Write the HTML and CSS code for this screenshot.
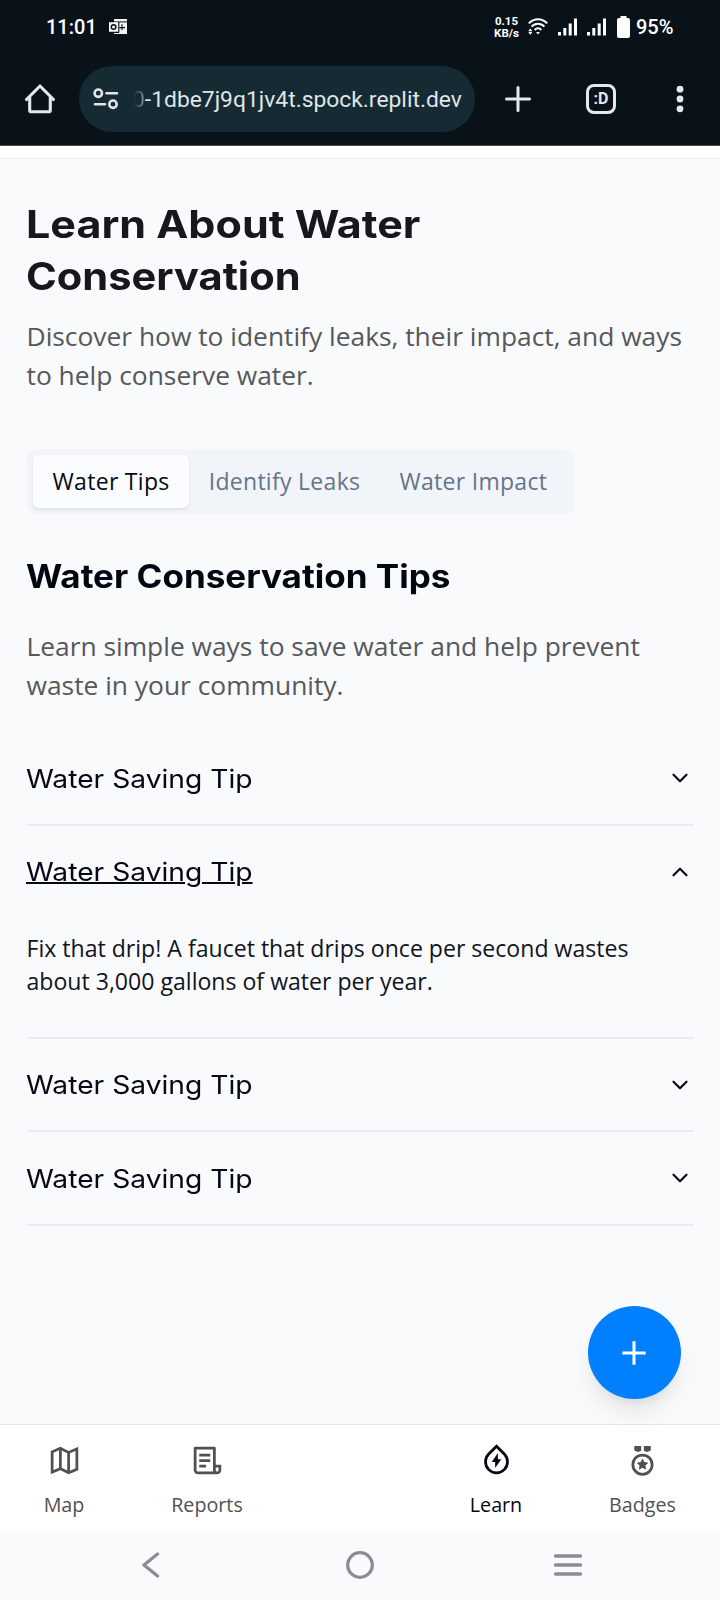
FILE: index.html
```html
<!DOCTYPE html>
<html lang="en">
<head>
<meta charset="utf-8">
<title>Learn About Water Conservation</title>
<link rel="stylesheet" href="styles.css">
</head>
<body>
<div class="phone">
  <header class="chrome">
    <div class="status">
      <span class="clock">11:01</span>
      <svg class="mail" width="19" height="16" viewBox="0 0 19 16"><path fill="#f2f4f5" d="M5 0h13v15H5z"/><path fill="#0a1219" d="M5 2.4h13v1H5z"/><path fill="#f2f4f5" d="M0 3.2h9.2v9.6H0z"/><circle cx="4.6" cy="8" r="2.3" fill="none" stroke="#0a1219" stroke-width="1.4"/><path stroke="#0a1219" stroke-width="1.1" d="M9.8 3v10.4M13 5.2v6M10.5 8.6h5.5M5 13.4h5"/></svg>
      <span class="rate">0.15<br>KB/s</span>
      <svg class="wifi" width="20" height="18" viewBox="0 0 20 18" fill="none" stroke="#fff" stroke-width="2"><path d="M.8 5.4C6-.2 14-.2 19.2 5.4M3.6 8.7c3.6-4 9.200-4 12.800 0M6.700 12c2-2.300 4.600-2.300 6.600 0"/><path fill="#fff" stroke="none" d="M8 14h4l-2 2.500zM.3 13.200l2-2.900 2 2.900zM.3 14h4l-2 2.900z"/></svg>
      <svg class="sig1" width="20" height="18" viewBox="0 0 20 18" fill="#fff"><path d="M0 14h3v3.500H0zM5.300 10h3v7.500h-3zM10.700 5.500h3v12h-3zM16 .5h3v17h-3z"/></svg>
      <svg class="sig2" width="20" height="18" viewBox="0 0 20 18" fill="#fff"><path d="M0 14h3v3.500H0zM5.300 10h3v7.500h-3zM10.700 5.500h3v12h-3zM16 .5h3v17h-3z"/></svg>
      <svg class="batt" width="13" height="22" viewBox="0 0 13 22" fill="#fff"><path d="M3.500 0h6v2H11a2 2 0 0 1 2 2v16a2 2 0 0 1-2 2H2a2 2 0 0 1-2-2V4a2 2 0 0 1 2-2h1.500z"/></svg>
      <span class="pct">95%</span>
    </div>
    <div class="toolbar">
      <svg class="home" width="32" height="32" viewBox="0 0 32 32" fill="none" stroke="#e6e9eb" stroke-width="3.100" stroke-linejoin="round" stroke-linecap="round"><path d="M2.500 16.500 16 3l13.500 13.500M5.700 14v13.200q0 1.600 1.600 1.600h17.400q1.600 0 1.600-1.600V14"/></svg>
      <div class="urlbar">
        <svg width="26" height="22" viewBox="0 0 26 22" fill="none" stroke="#dfe5e8" stroke-width="2.600" stroke-linecap="round"><circle cx="5.300" cy="5.200" r="3.700"/><path d="M13.500 5.200H24M2 16.200h10"/><circle cx="20" cy="16.200" r="3.700"/></svg>
        <span class="url"><span class="fade">0</span>-1dbe7j9q1jv4t.spock.replit.dev</span>
      </div>
      <svg class="plus" width="28" height="28" viewBox="0 0 28 28" stroke="#e6e9eb" stroke-width="3" stroke-linecap="round"><path d="M14 2.500v23M2.500 14h23"/></svg>
      <div class="tabs-count">:D</div>
      <svg class="dots" width="8" height="28" viewBox="0 0 8 28" fill="#e6e9eb"><circle cx="4" cy="4.200" r="3.400"/><circle cx="4" cy="14" r="3.400"/><circle cx="4" cy="23.800" r="3.400"/></svg>
    </div>
  </header>
  <div class="app-edge"></div>
  <main class="content">
    <h1><span class="wide w1">Learn About Water</span><br><span class="wide w2">Conservation</span></h1>
    <p class="lead">Discover how to identify leaks, their impact, and ways<br>to help conserve water.</p>
    <div class="tabs">
      <div class="tab active">Water Tips</div>
      <div class="tab">Identify Leaks</div>
      <div class="tab">Water Impact</div>
    </div>
    <h2><span class="wide w3">Water Conservation Tips</span></h2>
    <p class="lead sub">Learn simple ways to save water and help prevent<br>waste in your community.</p>
    <section class="accordion">
      <div class="item"><div class="head"><span class="wide w4">Water Saving Tip</span><svg width="26" height="26" viewBox="0 0 24 24"><path d="m6 9 6 6 6-6"/></svg></div></div>
      <div class="item open"><div class="head"><span class="wide w4">Water Saving Tip</span><svg width="26" height="26" viewBox="0 0 24 24"><path d="m6 15 6-6 6 6"/></svg></div>
        <p class="body">Fix that drip! A faucet that drips once per second wastes<br>about 3,000 gallons of water per year.</p></div>
      <div class="item"><div class="head"><span class="wide w4">Water Saving Tip</span><svg width="26" height="26" viewBox="0 0 24 24"><path d="m6 9 6 6 6-6"/></svg></div></div>
      <div class="item"><div class="head"><span class="wide w4">Water Saving Tip</span><svg width="26" height="26" viewBox="0 0 24 24"><path d="m6 9 6 6 6-6"/></svg></div></div>
    </section>
    <div class="fab"><svg width="24" height="24" viewBox="0 0 24 24" stroke="#fff" stroke-width="3"><path d="M12 .3v23.400M.3 12h23.400"/></svg></div>
  </main>
  <nav class="bottom">
    <div class="nav n1"><svg width="33" height="33" viewBox="0 0 24 24" fill="currentColor"><path d="M2 5l7-3 6 3 6.303-2.701a.5.5 0 0 1 .697.460V19l-7 3-6-3-6.303 2.701a.5.5 0 0 1-.697-.460V5zm14 14.395l4-1.714V5.033l-4 1.714v12.648zm-2-.131V6.736l-4-2v12.528l4 2zm-6-2.011V4.605L4 6.319v12.648l4-1.714z"/></svg><span>Map</span></div>
    <div class="nav n2"><svg width="33" height="33" viewBox="0 0 24 24" fill="currentColor"><path d="M17 2a1 1 0 0 1 1 1v12h4v4a3 3 0 0 1-3 3H5a3 3 0 0 1-3-3V3a1 1 0 0 1 1-1zm-1 2H4v15a1 1 0 0 0 1 1h11.170A3 3 0 0 1 16 19zm2 13v2a1 1 0 1 0 2 0v-2zM6 7h8v2H6zm0 4h8v2H6zm0 4h5v2H6z"/></svg><span>Reports</span></div>
    <div class="nav n3"><svg width="33" height="33" viewBox="0 0 24 24" fill="currentColor"><path d="M7.050 8.047 12 3.097l4.950 4.950a7 7 0 1 1-9.900 0zm11.314-1.414L12 .269 5.636 6.633a9 9 0 1 0 12.728 0zM13 11V6.500L8.500 13H11v4.500l4.500-6.500z" fill-rule="evenodd"/></svg><span>Learn</span></div>
    <div class="nav n4"><svg width="33" height="33" viewBox="0 0 24 24" fill="currentColor"><path d="M12 7a8 8 0 1 1 0 16 8 8 0 0 1 0-16zm0 2a6 6 0 1 0 0 12 6 6 0 0 0 0-12zm0 1.500 1.323 2.680 2.957.430-2.140 2.085.505 2.946L12 17.250l-2.645 1.390.505-2.945-2.140-2.086 2.957-.430zM11 1.500v3.500L8.500 5.900 6 4.800V1.500zm7 0v3.300l-2.500 1.100L13 5V1.500z"/></svg><span>Badges</span></div>
  </nav>
  <footer class="system">
    <svg width="18" height="26" viewBox="0 0 18 26"><path d="M15.500 2 2 13l13.500 11"/></svg>
    <svg class="circ" width="28" height="28" viewBox="0 0 28 28"><circle cx="14" cy="14" r="12.300"/></svg>
    <svg width="30" height="24" viewBox="0 0 30 24"><path d="M2.500 3h25M2.500 12h25M2.500 21h25"/></svg>
  </footer>
</div>
</body>
</html>
```

FILE: styles.css
```css
* { box-sizing: border-box; margin: 0; }
body { background: #f9fafc; font-family: "Open Sans", "Noto Sans", sans-serif; }
svg { display: block; flex: none; }
.phone { width: 720px; height: 1600px; display: flex; flex-direction: column; overflow: hidden; background: #f9fafc; }

/* Browser chrome */
.chrome { height: 146px; background: #0a1219; border-bottom: 1px solid #4a4d54; flex: none; font-family: Roboto, sans-serif; color: #fff; }
.status { height: 54px; padding-left: 46px; display: flex; align-items: center; white-space: nowrap; }
.clock { font-size: 20px; font-weight: 500; width: 63px; }
.mail { margin: -1px 0 0; }
.rate { font-size: 11.500px; line-height: 12.500px; font-weight: 700; width: 25px; margin-left: 366px; margin-right: 1px; text-align: center; }
.wifi { margin-left: 8px; }
.sig1 { margin-left: 10px; }
.sig2 { margin-left: 9px; }
.batt { margin-left: 10px; }
.pct { margin-left: 6px; font-size: 20px; font-weight: 500; }
.toolbar { height: 90px; display: flex; align-items: center; padding-left: 24px; }
.urlbar { width: 396px; height: 66px; margin-left: 23px; border-radius: 33px; background: #162a33; display: flex; align-items: center; padding-left: 14px; }
.url { margin-left: 13px; font-size: 22.850px; color: #dfe5e8; white-space: nowrap; }
.fade { color: transparent; background: linear-gradient(90deg, #162a33 15%, #8b979d); background-clip: text; -webkit-background-clip: text; }
.plus { margin-left: 29px; }
.tabs-count { width: 30px; height: 30px; border: 3px solid #e6e9eb; border-radius: 8px; margin-left: 54px; font-size: 16px; line-height: 24px; font-weight: 700; text-align: center; color: #e6e9eb; }
.dots { margin-left: 60px; }
.app-edge { height: 12px; background: #fff; flex: none; }

/* Page */
.content { flex: 1; position: relative; padding: 38.500px 26.500px 0; border-top: 1px solid #f0f1f4; white-space: nowrap; }
h1, h2, .head { font-family: Inter, sans-serif; }
.wide { display: inline-block; transform-origin: 0 50%; margin-left: -.8px; }
.w1 { transform: scaleX(1.118); }
.w2 { transform: scaleX(1.081); }
.w3 { transform: scaleX(1.094); }
.w4 { transform: scaleX(1.106); }
h1 { font-size: 38.500px; line-height: 52.500px; font-weight: 700; color: #16181b; }
.lead { margin-top: 14px; font-size: 26.370px; line-height: 39.500px; color: #56585b; }
.tabs { width: 548.500px; height: 65.600px; margin-top: 53px; background: #f1f4f9; border-radius: 9px; padding: 6.500px; display: flex; }
.tab { height: 53px; padding: 0 19.600px; line-height: 52px; font-size: 23px; letter-spacing: .29px; color: #64748b; }
.active { background: #fbfcfe; color: #050a14; border-radius: 6px; box-shadow: 0 1.500px 3px rgba(0,0,0,.08); }
h2 { margin-top: 40px; font-size: 32px; line-height: 46px; font-weight: 700; color: #030712; }
.sub { margin-top: 26.500px; line-height: 39.800px; }
.accordion { margin-top: 26.500px; width: 667px; }
.item { border-bottom: 2px solid #eaecf2; }
.head { height: 91.500px; display: flex; align-items: center; justify-content: space-between; font-size: 25.500px; font-weight: 400; color: #050816; }
.head svg { margin-right: .5px; fill: none; stroke: #050816; stroke-width: 2; stroke-linecap: round; stroke-linejoin: round; }
.open .head span { text-decoration: underline; text-decoration-thickness: 1.700px; }
.body { font-size: 23.080px; line-height: 32.800px; color: #11141d; padding: 14.400px 0 39.200px; }
.fab { position: absolute; left: 588px; top: 1147px; width: 93px; height: 93px; border-radius: 50%; background: #0080ff; display: flex; align-items: center; justify-content: center; padding: 0 1px 0 0; box-shadow: 0 16px 25px -5px rgba(0,0,0,.1), 0 6px 10px -6px rgba(0,0,0,.1); }

/* Bottom navigation */
.bottom { height: 107px; background: #fff; border-top: 1px solid #e2e4e8; display: flex; flex: none; }
.nav { display: flex; flex-direction: column; align-items: center; flex: none; padding-top: 19px; color: #505154; font-size: 19.700px; line-height: 28px; }
.nav span { margin-top: 14px; }
.n1 { width: 128px; }
.n2 { width: 158px; }
.n3 { width: 130px; margin-left: 145px; color: #060914; }
.n4 { width: 163px; }
.system { height: 69px; flex: none; display: flex; align-items: center; padding: 0 0 1px 142px; background: #f9fafc; }
.system svg { fill: none; stroke: #8c8d90; stroke-width: 3.300; stroke-linecap: round; stroke-linejoin: round; }
.circ { margin: 0 179px 0 186px; }
```
